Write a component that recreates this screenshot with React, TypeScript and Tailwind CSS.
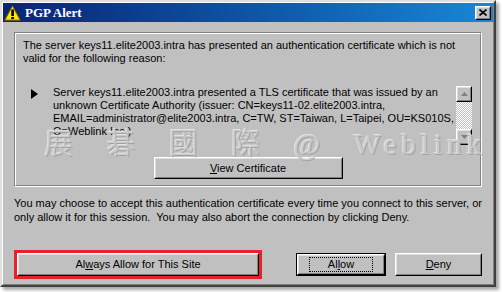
import React from "react";

const ui = "font-['Liberation_Sans',Arial,sans-serif] text-[11px] text-black";

const Raised = ({ children, className = "" }: { children?: React.ReactNode; className?: string }) => (
  <div className={`border border-t-white border-l-white border-r-black border-b-black ${className}`}>
    <div className="w-full h-full border border-t-[#dfdfdf] border-l-[#dfdfdf] border-r-[#808080] border-b-[#808080] flex items-center justify-center">
      {children}
    </div>
  </div>
);

const WarnIcon = () => (
  <svg width="17" height="16" viewBox="0 0 17 16">
    <path d="M8.5 0.8 L16.3 15.2 L0.7 15.2 Z" fill="#ffe600" stroke="#6b5a00" strokeWidth="1" strokeLinejoin="round" />
    <rect x="7.3" y="4.5" width="2.6" height="6.5" fill="#000" />
    <rect x="7.3" y="12" width="2.6" height="2.2" fill="#000" />
  </svg>
);

const Scrollbar = () => (
  <div className="w-[16px] h-[59px] flex flex-col bg-[repeating-conic-gradient(#c0c0c0_0%_25%,#ffffff_0%_50%)] bg-[length:2px_2px]">
    <Raised className="w-[16px] h-[16px] bg-[#c0c0c0]">
      <svg width="7" height="4" viewBox="0 0 7 4">
        <path d="M3.5 0 L7 4 L0 4 Z" fill="#808080" />
      </svg>
    </Raised>
    <div className="flex-1" />
    <Raised className="w-[16px] h-[16px] bg-[#c0c0c0]">
      <svg width="7" height="4" viewBox="0 0 7 4">
        <path d="M0 0 L7 0 L3.5 4 Z" fill="#808080" />
      </svg>
    </Raised>
  </div>
);

export default function App() {
  return (
    <div className="w-[502px] h-[292px] bg-white">
      <div className={`relative w-[496px] h-[287px] bg-[#c0c0c0] border-2 border-t-[#dfdfdf] border-l-[#dfdfdf] border-r-[#404040] border-b-[#404040] shadow-[3px_3px_3px_rgba(0,0,0,0.35)] ${ui}`}>
        <div className="h-full border border-t-white border-l-white border-r-[#808080] border-b-[#808080] flex flex-col">
          {/* title bar */}
          <div className="h-[19px] flex items-center bg-gradient-to-r from-[#0a2474] to-[#1a86d6] pl-[1px] pr-[2px]">
            <WarnIcon />
            <span className="ml-[4px] font-['Liberation_Serif',serif] font-bold text-[13px] text-white leading-none">PGP Alert</span>
            <div className="flex-1" />
            <Raised className="w-[16px] h-[14px] bg-[#c0c0c0]">
              <svg width="8" height="7" viewBox="0 0 8 7">
                <path d="M0.5 0.5 L7.5 6.5 M7.5 0.5 L0.5 6.5" stroke="#000" strokeWidth="1.6" />
              </svg>
            </Raised>
          </div>

          <div className="flex-1 flex flex-col px-[11px]">
            {/* group box */}
            <div className="mt-[10px] h-[155px] border border-t-[#808080] border-l-[#808080] border-r-white border-b-white">
              <div className="relative h-full border border-t-white border-l-white border-r-[#808080] border-b-[#808080] flex flex-col">
                <p className="pl-[7px] pt-[5px] leading-[13px] whitespace-nowrap">
                  The server keys11.elite2003.intra has presented an authentication certificate which is not
                  <br />
                  valid for the following reason:
                </p>

                <div className="mt-[21px] flex h-[59px] pl-[15px] pr-[8px]">
                  <svg width="8" height="10" viewBox="0 0 8 10" className="mt-[3px] shrink-0">
                    <path d="M0 0 L7 5 L0 10 Z" fill="#000" />
                  </svg>
                  <div className="flex-1 overflow-hidden pl-[14px] leading-[13px] whitespace-nowrap">
                    Server keys11.elite2003.intra presented a TLS certificate that was issued by an
                    <br />
                    unknown Certificate Authority (issuer: CN=keys11-02.elite2003.intra,
                    <br />
                    EMAIL=administrator@elite2003.intra, C=TW, ST=Taiwan, L=Taipei, OU=KS010S,
                    <br />
                    O=Weblink Inc.)
                  </div>
                  <Scrollbar />
                </div>

                <div className="mt-[12px] flex justify-center">
                  <Raised className="w-[189px] h-[22px] bg-[#c0c0c0]">
                    <span>
                      <u>V</u>iew Certificate
                    </span>
                  </Raised>
                </div>

                {/* watermark */}
                <div className="absolute left-[28px] top-[96px] w-[442px] flex justify-between items-center font-['Liberation_Serif','Noto_Sans_CJK_TC',serif] text-[29px] font-light leading-none text-[#cacaca] [text-shadow:1px_1px_0_#a2a2a2,-1px_-1px_0_#e4e4e4] pointer-events-none">
                  <span>展</span>
                  <span>碁</span>
                  <span>國</span>
                  <span>際</span>
                  <span>@</span>
                  <span className="tracking-[5px]">Weblink</span>
                </div>
              </div>
            </div>

            <p className="mt-[9px] leading-[14px] whitespace-nowrap">
              You may choose to accept this authentication certificate every time you connect to this server, or
              <br />
              only allow it for this session.&nbsp; You may also abort the connection by clicking Deny.
            </p>

            {/* buttons */}
            <div className="mt-[26px] flex items-center">
              <div className="border-[3px] border-[#e8202a]">
                <Raised className="w-[242px] h-[23px] bg-[#c0c0c0]">
                  <span>
                    Al<u>w</u>ays Allow for This Site
                  </span>
                </Raised>
              </div>
              <div className="ml-[34px] border border-black">
                <Raised className="w-[88px] h-[21px] bg-[#c0c0c0]">
                  <span className="px-[18px] border border-dotted border-black leading-[13px]">
                    Al<u>l</u>ow
                  </span>
                </Raised>
              </div>
              <Raised className="ml-[9px] w-[90px] h-[23px] bg-[#c0c0c0]">
                <span>
                  <u>D</u>eny
                </span>
              </Raised>
            </div>
          </div>
        </div>
      </div>
    </div>
  );
}
